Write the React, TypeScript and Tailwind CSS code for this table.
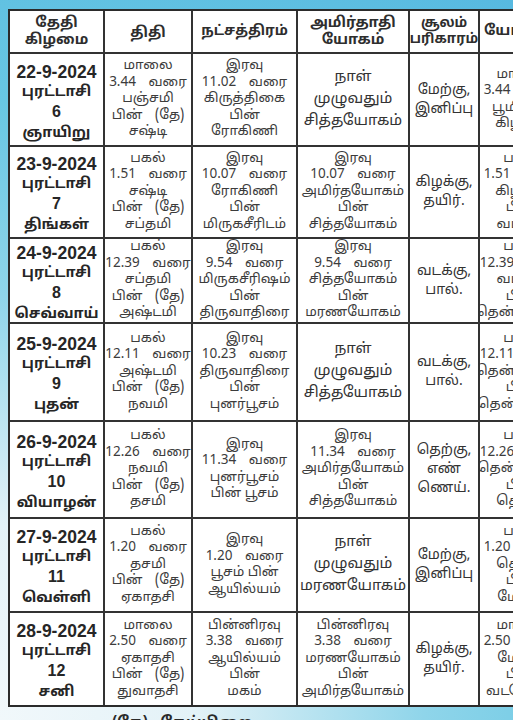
import React from "react";

type Cell = { lines: string[]; kind?: "tight" | "big" | "sool" };

const dates = [
  ["22-9-2024", "புரட்டாசி", "6", "ஞாயிறு"],
  ["23-9-2024", "புரட்டாசி", "7", "திங்கள்"],
  ["24-9-2024", "புரட்டாசி", "8", "செவ்வாய்"],
  ["25-9-2024", "புரட்டாசி", "9", "புதன்"],
  ["26-9-2024", "புரட்டாசி", "10", "வியாழன்"],
  ["27-9-2024", "புரட்டாசி", "11", "வெள்ளி"],
  ["28-9-2024", "புரட்டாசி", "12", "சனி"],
];

const thithi = [
  ["மாலை", "3.44 வரை", "பஞ்சமி", "பின் (தே)", "சஷ்டி"],
  ["பகல்", "1.51 வரை", "சஷ்டி", "பின் (தே)", "சப்தமி"],
  ["பகல்", "12.39 வரை", "சப்தமி", "பின் (தே)", "அஷ்டமி"],
  ["பகல்", "12.11 வரை", "அஷ்டமி", "பின் (தே)", "நவமி"],
  ["பகல்", "12.26 வரை", "நவமி", "பின் (தே)", "தசமி"],
  ["பகல்", "1.20 வரை", "தசமி", "பின் (தே)", "ஏகாதசி"],
  ["மாலை", "2.50 வரை", "ஏகாதசி", "பின் (தே)", "துவாதசி"],
];

const star = [
  ["இரவு", "11.02 வரை", "கிருத்திகை", "பின்", "ரோகிணி"],
  ["இரவு", "10.07 வரை", "ரோகிணி", "பின்", "மிருகசீரிடம்"],
  ["இரவு", "9.54 வரை", "மிருகசீரிஷம்", "பின்", "திருவாதிரை"],
  ["இரவு", "10.23 வரை", "திருவாதிரை", "பின்", "புனர்பூசம்"],
  ["இரவு", "11.34 வரை", "புனர்பூசம்", "பின் பூசம்"],
  ["இரவு", "1.20 வரை", "பூசம் பின்", "ஆயில்யம்"],
  ["பின்னிரவு", "3.38 வரை", "ஆயில்யம்", "பின்", "மகம்"],
];

const amirtha: Cell[] = [
  { lines: ["நாள்", "முழுவதும்", "சித்தயோகம்"], kind: "big" },
  { lines: ["இரவு", "10.07 வரை", "அமிர்தயோகம்", "பின்", "சித்தயோகம்"] },
  { lines: ["இரவு", "9.54 வரை", "சித்தயோகம்", "பின்", "மரணயோகம்"] },
  { lines: ["நாள்", "முழுவதும்", "சித்தயோகம்"], kind: "big" },
  { lines: ["இரவு", "11.34 வரை", "அமிர்தயோகம்", "பின்", "சித்தயோகம்"] },
  { lines: ["நாள்", "முழுவதும்", "மரணயோகம்"], kind: "big" },
  { lines: ["பின்னிரவு", "3.38 வரை", "மரணயோகம்", "பின்", "அமிர்தயோகம்"] },
];

const soolam = [
  ["மேற்கு,", "இனிப்பு"],
  ["கிழக்கு,", "தயிர்."],
  ["வடக்கு,", "பால்."],
  ["வடக்கு,", "பால்."],
  ["தெற்கு,", "எண்", "ணெய்."],
  ["மேற்கு,", "இனிப்பு"],
  ["கிழக்கு,", "தயிர்."],
];

const yogini = [
  ["மாலை", "3.44 வரை", "பூமியில்", "கிழக்கு"],
  ["பகல்", "1.51 வரை", "கிழக்கு", "பின்", "வடக்கு"],
  ["பகல்", "12.39 வரை", "வடக்கு", "பின்", "தென்கிழக்கு"],
  ["பகல்", "12.11 வரை", "தென்கிழக்கு", "பின்", "தென்மேற்கு"],
  ["பகல்", "12.26 வரை", "தென்மேற்கு", "பின்", "தெற்கு"],
  ["பகல்", "1.20 வரை", "தெற்கு", "பின்", "மேற்கு"],
  ["மாலை", "2.50 வரை", "மேற்கு", "பின்", "வடமேற்கு"],
];

const font = "font-['Noto_Sans_Tamil','Lohit_Tamil','Noto_Sans',sans-serif]";

function Lines({ lines }: { lines: string[] }) {
  return (
    <div className="flex h-full flex-col items-center justify-center whitespace-nowrap text-[13.5px] leading-[16.5px] text-[#3c3c3c]">
      {lines.map((l, i) => (
        <div key={i} className={/வரை|\(தே\)/.test(l) ? "[word-spacing:9px]" : ""}>
          {l}
        </div>
      ))}
    </div>
  );
}

export default function App() {
  const cell = "bg-white overflow-hidden";
  return (
    <div
      className={`${font} relative h-[720px] w-[513px] overflow-hidden bg-[radial-gradient(circle_at_0%_100%,#f1f8fb_0%,#e3f2f7_22%,#8fd5ea_48%,#68c7e3_70%,#57b9e0_100%)] pl-[8px] pt-[9px]`}
    >
      <div className="w-[600px] border-2 border-[#2b2b2b] bg-[#333]">
        <div className="grid grid-cols-[93px_86px_103px_110px_68px_120px] grid-rows-[41px_91px_90px_83px_96px_95px_92px_92px] gap-[2px]">
          {/* header */}
          <div className={`${cell} flex flex-col items-center justify-center text-[14.5px] font-bold leading-[17px] text-[#2e2e2e]`}>
            <div>தேதி</div>
            <div>கிழமை</div>
          </div>
          <div className={`${cell} flex items-center justify-center pt-[4px] text-[14.5px] font-bold text-[#2e2e2e]`}>திதி</div>
          <div className={`${cell} flex items-center justify-center text-[14px] font-bold text-[#2e2e2e]`}>நட்சத்திரம்</div>
          <div className={`${cell} flex flex-col items-center justify-center text-[14.5px] font-bold leading-[17px] text-[#2e2e2e]`}>
            <div>அமிர்தாதி</div>
            <div>யோகம்</div>
          </div>
          <div className={`${cell} flex flex-col items-center justify-center text-[13.5px] font-bold leading-[16px] text-[#2e2e2e]`}>
            <div>சூலம்</div>
            <div>பரிகாரம்</div>
          </div>
          <div className={`${cell} flex items-center whitespace-nowrap pl-[4px] text-[14.5px] font-bold text-[#2e2e2e]`}>யோகினி</div>

          {dates.map((d, r) => (
            <React.Fragment key={r}>
              <div className={`${cell} flex flex-col items-center justify-center whitespace-nowrap pt-[6px] font-bold text-[#262626]`}>
                <div className="font-['Liberation_Sans',sans-serif] text-[17.5px] leading-[20px]">{d[0]}</div>
                <div className="text-[14.5px] leading-[20px]">{d[1]}</div>
                <div className="font-['Liberation_Sans',sans-serif] text-[16px] leading-[20px]">{d[2]}</div>
                <div className="text-[14.5px] leading-[22px]">{d[3]}</div>
              </div>
              <div className={cell}>
                <Lines lines={thithi[r]} />
              </div>
              <div className={cell}>
                <Lines lines={star[r]} />
              </div>
              <div className={cell}>
                {amirtha[r].kind === "big" ? (
                  <div className="flex h-full flex-col items-center justify-center whitespace-nowrap text-[15px] leading-[22px] text-[#333]">
                    {amirtha[r].lines.map((l, i) => (
                      <div key={i}>{l}</div>
                    ))}
                  </div>
                ) : (
                  <Lines lines={amirtha[r].lines} />
                )}
              </div>
              <div className={cell}>
                <div className="flex h-full flex-col items-center justify-center whitespace-nowrap text-[14px] leading-[19px] text-[#333]">
                  {soolam[r].map((l, i) => (
                    <div key={i}>{l}</div>
                  ))}
                </div>
              </div>
              <div className={`${cell} flex justify-start`}>
                <div className="flex h-full w-[82px] flex-col items-center justify-center whitespace-nowrap text-[13.5px] leading-[16.5px] text-[#3c3c3c]">
                  {yogini[r].map((l, i) => (
                    <div key={i} className={/வரை/.test(l) ? "[word-spacing:6px]" : ""}>
                      {l}
                    </div>
                  ))}
                </div>
              </div>
            </React.Fragment>
          ))}
        </div>
      </div>
      <div className="mt-[6px] pl-[104px] text-[15px] font-bold text-[#2a2a2a]">(தே) - தேய்பிறை</div>
    </div>
  );
}
